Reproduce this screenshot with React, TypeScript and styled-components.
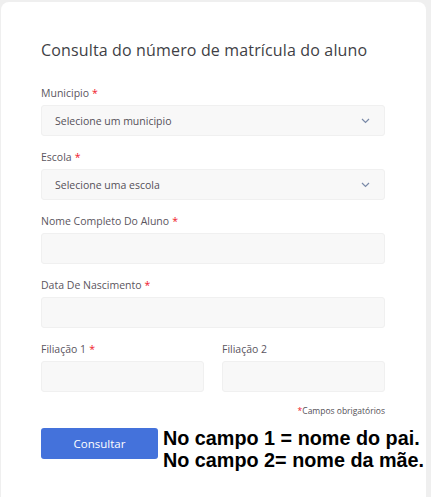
import React from "react";
import styled, { createGlobalStyle } from "styled-components";

const Global = createGlobalStyle`
  html, body { margin: 0; padding: 0; background: #efefef; }
  body { font-family: "Open Sans", "Noto Sans", sans-serif; }
  * { box-sizing: border-box; }
`;

const Page = styled.div`
  padding: 2px 5px 0 1px;
  height: 497px;
  overflow: hidden;
`;

const Card = styled.div`
  background: #ffffff;
  border-radius: 8px 8px 0 0;
  padding: 36px 41px 40px 40px;
  min-height: 520px;
  display: flex;
  flex-direction: column;
`;

const Title = styled.h1`
  margin: 0 0 23px 0;
  font-size: 16px;
  line-height: 24px;
  font-weight: 400;
  color: #3f3f46;
  letter-spacing: 0.15px;
`;

const Field = styled.div<{ $grow?: boolean }>`
  display: flex;
  flex-direction: column;
  gap: 4px;
  margin-bottom: 13px;
  flex: ${(p) => (p.$grow ? "1 1 0" : "none")};
  min-width: 0;
`;

const Label = styled.label`
  font-size: 10.5px;
  line-height: 16px;
  color: #5b5560;
`;

const Req = styled.span<{ $tight?: boolean }>`
  color: #f0182a;
  margin-left: ${(p) => (p.$tight ? "0" : "3px")};
`;

const Box = styled.div`
  height: 31px;
  background: #f8f8f8;
  border: 1px solid #f0f0f0;
  border-radius: 3px;
  display: flex;
  align-items: center;
  justify-content: space-between;
  padding: 0 14px 0 13px;
  font-size: 10.5px;
  color: #555058;
`;

const Row = styled.div`
  display: flex;
  gap: 18px;
`;

const Note = styled.div`
  text-align: right;
  font-size: 8.5px;
  line-height: 12px;
  color: #555058;
  margin-bottom: 11px;
`;

const Actions = styled.div`
  display: flex;
  align-items: flex-start;
  gap: 5px;
`;

const Button = styled.button`
  width: 117px;
  height: 31px;
  flex: none;
  background: #4472db;
  border: none;
  border-radius: 3px;
  color: #ffffff;
  font-family: inherit;
  font-size: 11.5px;
  cursor: pointer;
`;

const Annotation = styled.div`
  font-family: "Liberation Sans", Arial, sans-serif;
  font-weight: 700;
  font-size: 19.8px;
  line-height: 22px;
  color: #000;
  white-space: nowrap;
  margin-top: -1px;
  margin-right: -40px;
`;

const Chevron = () => (
  <svg width="9" height="6" viewBox="0 0 9 6" fill="none">
    <path d="M1 1l3.5 3.5L8 1" stroke="#7a8aa8" strokeWidth="1.2" />
  </svg>
);

export default function App() {
  return (
    <>
      <Global />
      <Page>
        <Card>
          <Title>Consulta do número de matrícula do aluno</Title>
          <Field>
            <Label>
              Municipio<Req>*</Req>
            </Label>
            <Box>
              Selecione um municipio
              <Chevron />
            </Box>
          </Field>
          <Field>
            <Label>
              Escola<Req>*</Req>
            </Label>
            <Box>
              Selecione uma escola
              <Chevron />
            </Box>
          </Field>
          <Field>
            <Label>
              Nome Completo Do Aluno<Req>*</Req>
            </Label>
            <Box />
          </Field>
          <Field>
            <Label>
              Data De Nascimento<Req>*</Req>
            </Label>
            <Box />
          </Field>
          <Row>
            <Field $grow>
              <Label>
                Filiação 1<Req>*</Req>
              </Label>
              <Box />
            </Field>
            <Field $grow>
              <Label>Filiação 2</Label>
              <Box />
            </Field>
          </Row>
          <Note>
            <Req $tight>*</Req>Campos obrigatórios
          </Note>
          <Actions>
            <Button>Consultar</Button>
            <Annotation>
              No campo 1 = nome do pai.
              <br />
              No campo 2= nome da mãe.
            </Annotation>
          </Actions>
        </Card>
      </Page>
    </>
  );
}
